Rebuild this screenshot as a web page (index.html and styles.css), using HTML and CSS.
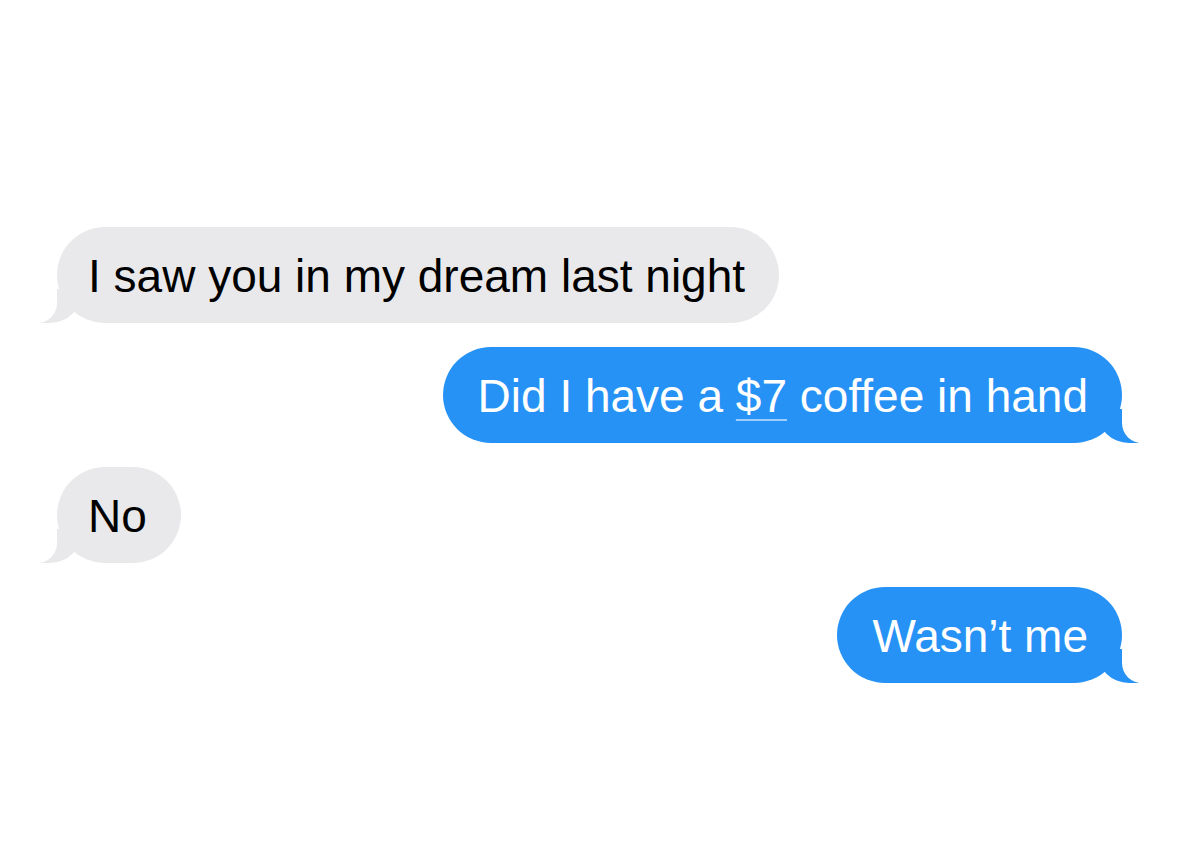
FILE: index.html
```html
<!DOCTYPE html>
<html lang="en">
<head>
    <meta charset="UTF-8">
    <title>Messages</title>
    <link rel="stylesheet" href="styles.css">
</head>
<body>
    <div class="thread">
        <div class="msg received">I saw you in my dream last night</div>
        <div class="msg sent">Did I have a <span class="link">$7</span> coffee in hand</div>
        <div class="msg received">No</div>
        <div class="msg sent">Wasn&rsquo;t me</div>
    </div>
</body>
</html>
```

FILE: styles.css
```css
body {
    margin: 0;
    background: #ffffff;
    font-family: 'Liberation Sans', Arial, sans-serif;
}

.thread {
    display: flex;
    flex-direction: column;
    gap: 24px;
    padding: 227px 57px 0 57px;
}

.msg {
    position: relative;
    max-width: 80%;
    padding: 23px 34px 21px 31px;
    font-size: 46px;
    line-height: 52px;
    border-radius: 48px;
}

.received {
    align-self: flex-start;
    background: #e9e9eb;
    color: #000000;
}

.sent {
    align-self: flex-end;
    background: #2792f5;
    color: #ffffff;
    padding-left: 35px;
}

/* tails */
.msg::before,
.msg::after {
    content: '';
    position: absolute;
    bottom: 0;
    height: 34px;
}

.received::before {
    left: -17px;
    width: 42px;
    background: #e9e9eb;
    border-bottom-right-radius: 32px;
}

.received::after {
    left: -30px;
    width: 30px;
    background: #ffffff;
    border-bottom-right-radius: 20px;
}

.sent::before {
    right: -17px;
    width: 42px;
    background: #2792f5;
    border-bottom-left-radius: 32px;
}

.sent::after {
    right: -30px;
    width: 30px;
    background: #ffffff;
    border-bottom-left-radius: 20px;
}

.link {
    text-decoration: underline;
    text-decoration-color: rgba(255, 255, 255, 0.55);
    text-decoration-thickness: 2px;
    text-underline-offset: 7px;
}
```
